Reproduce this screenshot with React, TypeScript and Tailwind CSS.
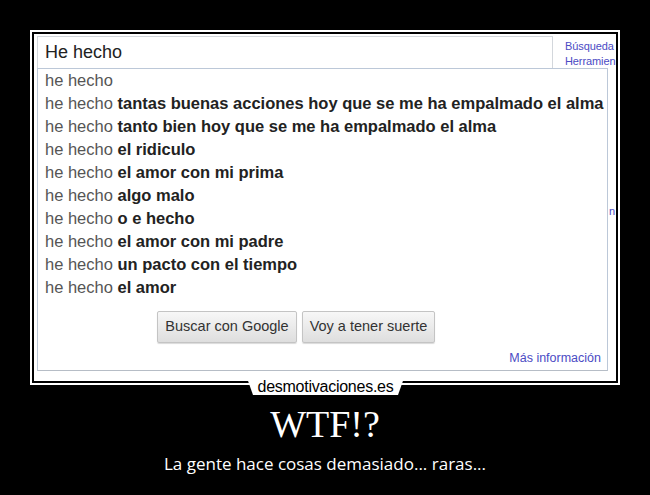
const rows: [string, string][] = [
  ['he hecho', ''],
  ['he hecho', 'tantas buenas acciones hoy que se me ha empalmado el alma'],
  ['he hecho', 'tanto bien hoy que se me ha empalmado el alma'],
  ['he hecho', 'el ridiculo'],
  ['he hecho', 'el amor con mi prima'],
  ['he hecho', 'algo malo'],
  ['he hecho', 'o e hecho'],
  ['he hecho', 'el amor con mi padre'],
  ['he hecho', 'un pacto con el tiempo'],
  ['he hecho', 'el amor'],
];

function GoogleShot() {
  return (
    <div className="relative h-[347px] overflow-hidden bg-white font-['Liberation_Sans',Arial,sans-serif]">
      <div className="flex h-[34px]">
        <div className="ml-[3px] mt-[2px] flex w-[516px] shrink-0 items-center border-l border-r border-t border-[#d3d7dc] pl-[7px] text-[18px] text-[#222]">
          He hecho
        </div>
        <div className="ml-[12px] flex shrink-0 flex-col pt-[5px] text-[11px] leading-[15px] tracking-[-0.1px] whitespace-nowrap text-[#4b4bc4]">
          <span>Búsqueda</span>
          <span>Herramien</span>
        </div>
      </div>

      <div className="ml-[3px] flex h-[303px] w-[571px] flex-col border border-[#bcc8d8] border-b-[#b6bdc6]">
        <ul className="pl-[7px] text-[16.5px] leading-[23px] whitespace-nowrap">
          {rows.map(([plain, bold], i) => (
            <li key={i}>
              <span className="text-[#555]">{plain}</span>
              {bold && <b className="font-bold text-[#222]"> {bold}</b>}
            </li>
          ))}
        </ul>

        <div className="ml-[119px] mt-[12px] flex gap-[5px]">
          <button className="h-[32px] w-[140px] rounded-[2px] border border-[#c4c4c4] bg-gradient-to-b from-[#f7f7f7] to-[#dedede] text-[14.5px] text-[#333] shadow-[0_1px_1px_rgba(0,0,0,0.15)]">
            Buscar con Google
          </button>
          <button className="h-[32px] w-[133px] rounded-[2px] border border-[#c4c4c4] bg-gradient-to-b from-[#f7f7f7] to-[#dedede] text-[14.5px] text-[#333] shadow-[0_1px_1px_rgba(0,0,0,0.15)]">
            Voy a tener suerte
          </button>
        </div>

        <div className="mt-[8px] pr-[6px] text-right text-[12.5px] leading-[15px] text-[#4b4bc4]">
          Más información
        </div>
      </div>

      <span className="absolute left-[575px] top-[169px] text-[11px] text-[#4b4bc4]">n</span>
    </div>
  );
}

export default function App() {
  return (
    <div className="flex h-[495px] w-[650px] flex-col items-center bg-black pt-[30px]">
      <div className="relative w-[590px] border-2 border-white p-[2px]">
        <GoogleShot />
        <div className="absolute left-[215px] top-[346px] flex h-[17px] w-[157px] items-center justify-center bg-white [clip-path:polygon(0_0,100%_0,calc(100%-6px)_100%,6px_100%)]">
          <span className="font-['Liberation_Sans',Arial,sans-serif] text-[16px] leading-none tracking-[-0.25px] text-black">
            desmotivaciones.es
          </span>
        </div>
      </div>

      <h1 className="mt-[17px] font-['Liberation_Serif','Times_New_Roman',serif] text-[38px] leading-[44px] text-white">
        WTF!?
      </h1>
      <p className="mt-[7px] font-['Open_Sans',sans-serif] text-[17px] leading-[22px] text-white">
        La gente hace cosas demasiado... raras...
      </p>
    </div>
  );
}
